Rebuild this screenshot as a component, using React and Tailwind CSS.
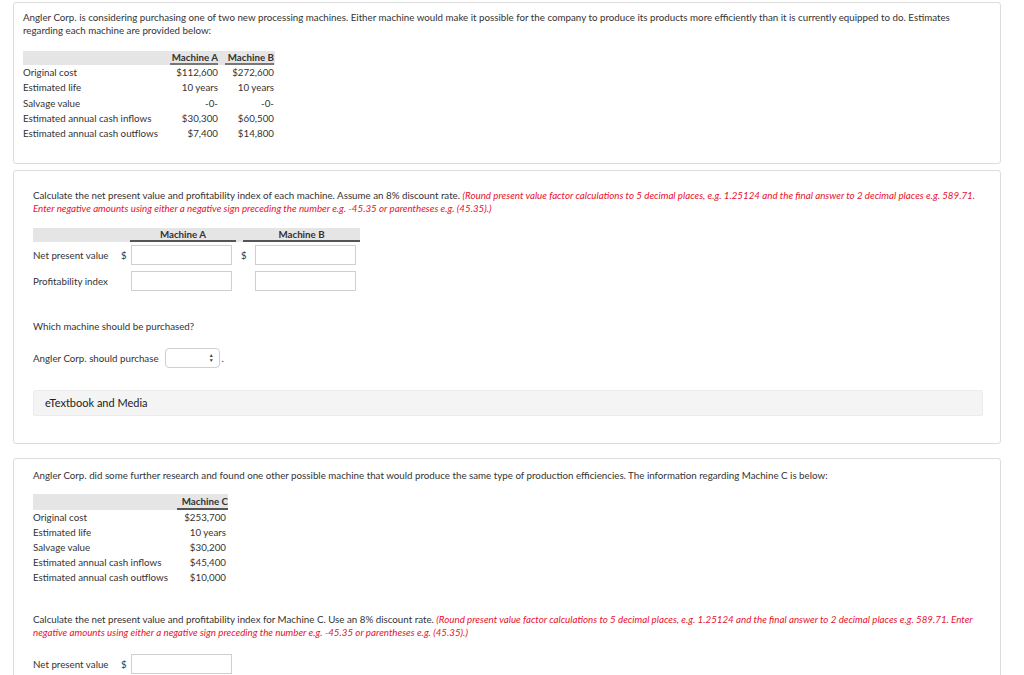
import React from "react";

const font = { fontFamily: "Lato, 'Liberation Sans', sans-serif" };

const machinesAB = [
  ["Original cost", "$112,600", "$272,600"],
  ["Estimated life", "10 years", "10 years"],
  ["Salvage value", "-0-", "-0-"],
  ["Estimated annual cash inflows", "$30,300", "$60,500"],
  ["Estimated annual cash outflows", "$7,400", "$14,800"],
];

const machineC = [
  ["Original cost", "$253,700"],
  ["Estimated life", "10 years"],
  ["Salvage value", "$30,200"],
  ["Estimated annual cash inflows", "$45,400"],
  ["Estimated annual cash outflows", "$10,000"],
];

const Panel = ({ className = "", children }) => (
  <div className={`ml-[13px] w-[988px] border border-[#dcdcdc] rounded-[3px] bg-white ${className}`}>
    {children}
  </div>
);

const Box = () => (
  <div className="w-[101px] h-[20px] border border-[#cfcfcf] bg-white" />
);

const Instructions = ({ children }) => (
  <p className="leading-[13px]">
    {children}{" "}
    <span className="italic text-[#e8102c]">
      (Round present value factor calculations to 5 decimal places, e.g. 1.25124 and the final answer to 2 decimal places e.g. 589.71. Enter negative amounts using either a negative sign preceding the number e.g. -45.35 or parentheses e.g. (45.35).)
    </span>
  </p>
);

const App = () => {
  return (
    <div className="bg-white min-h-[675px] pt-[2px] text-[9.75px] text-[#333]" style={font}>
      {/* panel 1 */}
      <Panel className="pl-[9px] pr-[10px] pt-[8px] pb-[22px]">
        <p className="leading-[13px]">
          Angler Corp. is considering purchasing one of two new processing machines. Either machine would make it possible for the company to produce its products more efficiently than it is currently equipped to do. Estimates regarding each machine are provided below:
        </p>
        <div className="mt-[14px] w-[252px]">
          <div className="grid grid-cols-[147px_48px_7px_49px] h-[14px] bg-[#e5e5e5] items-end font-bold">
            <div />
            <div className="text-right leading-[12px] border-b-2 border-[#777]">Machine A</div>
            <div />
            <div className="text-right leading-[12px] border-b-2 border-[#777]">Machine B</div>
          </div>
          {machinesAB.map((r) => (
            <div key={r[0]} className="grid grid-cols-[147px_48px_7px_49px] h-[15.25px] leading-[15px]">
              <div>{r[0]}</div>
              <div className="text-right">{r[1]}</div>
              <div />
              <div className="text-right">{r[2]}</div>
            </div>
          ))}
        </div>
      </Panel>

      {/* panel 2 */}
      <Panel className="mt-[6px] pl-[19px] pr-[17px] pt-[18px] pb-[27px]">
        <Instructions>
          Calculate the net present value and profitability index of each machine. Assume an 8% discount rate.
        </Instructions>
        <div className="mt-[13px] w-[327px]">
          <div className="flex h-[14px] bg-[#e5e5e5] items-end">
            <div className="w-[97px]" />
            <div className="w-[106px] text-center font-bold leading-[12px] border-b-2 border-[#555]">Machine A</div>
            <div className="w-[7px]" />
            <div className="flex-1 text-center font-bold leading-[12px] border-b-2 border-[#555]">Machine B</div>
          </div>
          <div className="flex items-center mt-[3px] h-[20px]">
            <div className="w-[88px]">Net present value</div>
            <div className="w-[10px]">$</div>
            <Box />
            <div className="w-[14px] ml-[9px]">$</div>
            <Box />
          </div>
          <div className="flex items-center mt-[6px] h-[20px]">
            <div className="w-[98px]">Profitability index</div>
            <Box />
            <div className="w-[23px]" />
            <Box />
          </div>
        </div>
        <p className="mt-[29px] leading-[13px]">Which machine should be purchased?</p>
        <div className="flex items-center mt-[15px] h-[20px]">
          <span className="mr-[6px]">Angler Corp. should purchase</span>
          <div className="relative w-[55px] h-[20px] border border-[#cfcfcf] rounded-[4px] bg-white">
            <div className="absolute right-[5px] top-[4px] flex flex-col items-center text-[#444] text-[5px] leading-[5px]">
              <span>▲</span>
              <span>▼</span>
            </div>
          </div>
          <span className="ml-[2px]">.</span>
        </div>
        <div className="mt-[22px] h-[26px] bg-[#f4f4f4] border border-[#ececec] rounded-[2px] flex items-center pl-[11px] text-[11px] text-[#222]">
          eTextbook and Media
        </div>
      </Panel>

      {/* panel 3 */}
      <Panel className="mt-[14px] pl-[19px] pr-[17px] pt-[10px] pb-[20px]">
        <p className="leading-[13px]">
          Angler Corp. did some further research and found one other possible machine that would produce the same type of production efficiencies. The information regarding Machine C is below:
        </p>
        <div className="mt-[12px] w-[195px]">
          <div className="grid grid-cols-[144px_51px] h-[16px] bg-[#e5e5e5] items-end font-bold">
            <div />
            <div className="text-right leading-[13px] border-b-2 border-[#555]">Machine C</div>
          </div>
          {machineC.map((r) => (
            <div key={r[0]} className="grid grid-cols-[144px_51px] h-[15px] leading-[15px]">
              <div>{r[0]}</div>
              <div className="text-right pr-[2px]">{r[1]}</div>
            </div>
          ))}
        </div>
        <div className="mt-[28px]">
          <Instructions>
            Calculate the net present value and profitability index for Machine C. Use an 8% discount rate.
          </Instructions>
        </div>
        <div className="flex items-center mt-[15px] h-[20px]">
          <div className="w-[88px]">Net present value</div>
          <div className="w-[10px]">$</div>
          <Box />
        </div>
      </Panel>
    </div>
  );
};

export default App;
